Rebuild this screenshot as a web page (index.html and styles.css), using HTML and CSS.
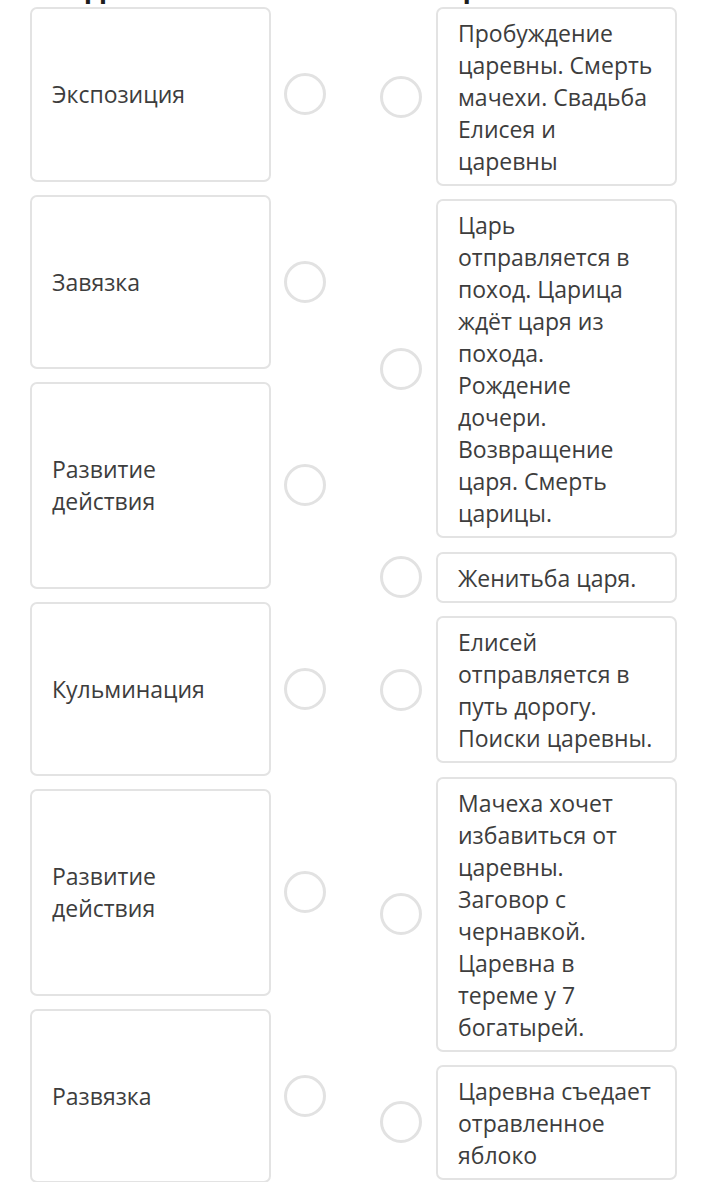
FILE: index.html
```html
<!DOCTYPE html>
<html lang="ru">
<head>
<meta charset="utf-8">
<title>Соотнесите</title>
<link rel="stylesheet" href="styles.css">
</head>
<body>
<div class="title"><span>Соедините части композиции сказки</span></div>
<div class="board">
  <div class="col col-terms">
    <div class="row"><div class="card card-term">Экспозиция</div><span class="dot"></span></div>
    <div class="row"><div class="card card-term">Завязка</div><span class="dot"></span></div>
    <div class="row"><div class="card card-term">Развитие действия</div><span class="dot"></span></div>
    <div class="row"><div class="card card-term">Кульминация</div><span class="dot"></span></div>
    <div class="row"><div class="card card-term">Развитие действия</div><span class="dot"></span></div>
    <div class="row"><div class="card card-term">Развязка</div><span class="dot"></span></div>
  </div>
  <div class="col col-defs">
    <div class="row"><span class="dot"></span><div class="card card-def">Пробуждение царевны. Смерть мачехи. Свадьба Елисея и царевны</div></div>
    <div class="row"><span class="dot"></span><div class="card card-def">Царь отправляется в поход. Царица ждёт царя из похода. Рождение дочери. Возвращение царя. Смерть царицы.</div></div>
    <div class="row"><span class="dot"></span><div class="card card-def">Женитьба царя.</div></div>
    <div class="row"><span class="dot"></span><div class="card card-def">Елисей отправляется в путь дорогу. Поиски царевны.</div></div>
    <div class="row"><span class="dot"></span><div class="card card-def">Мачеха хочет избавиться от царевны. Заговор с чернавкой. Царевна в тереме у 7 богатырей.</div></div>
    <div class="row"><span class="dot"></span><div class="card card-def">Царевна съедает отравленное яблоко</div></div>
  </div>
</div>
</body>
</html>
```
FILE: styles.css
```css
html, body {
  margin: 0;
  padding: 0;
  background: #ffffff;
}

body {
  font-family: "Open Sans", "Noto Sans", sans-serif;
  color: #3d3d3d;
  overflow: hidden;
}

.title {
  height: 7px;
  overflow: hidden;
  padding-left: 30px;
}

.title span {
  display: block;
  margin-top: -28px;
  font-size: 30px;
  line-height: 30px;
  font-weight: 700;
  color: #1e1e1e;
  white-space: nowrap;
}

.board {
  display: flex;
  align-items: flex-start;
  gap: 54px;
  padding-left: 30px;
}

.col {
  display: flex;
  flex-direction: column;
}

.col-terms {
  gap: 13px;
}

.col-defs {
  gap: 13.4px;
}

.row {
  display: flex;
  align-items: center;
  gap: 13px;
}

.col-defs .row {
  gap: 14px;
}

.card {
  box-sizing: border-box;
  width: 241px;
  border: 2px solid #e3e3e3;
  border-radius: 7px;
  background: #fff;
  font-size: 23px;
  line-height: 32px;
}

.card-term {
  padding: 69.25px 20px;
}

.card-def {
  padding: 8px 16px 7px 20px;
}

.dot {
  flex-shrink: 0;
  box-sizing: border-box;
  width: 42px;
  height: 42px;
  border: 3px solid #e2e2e2;
  border-radius: 50%;
}
```
